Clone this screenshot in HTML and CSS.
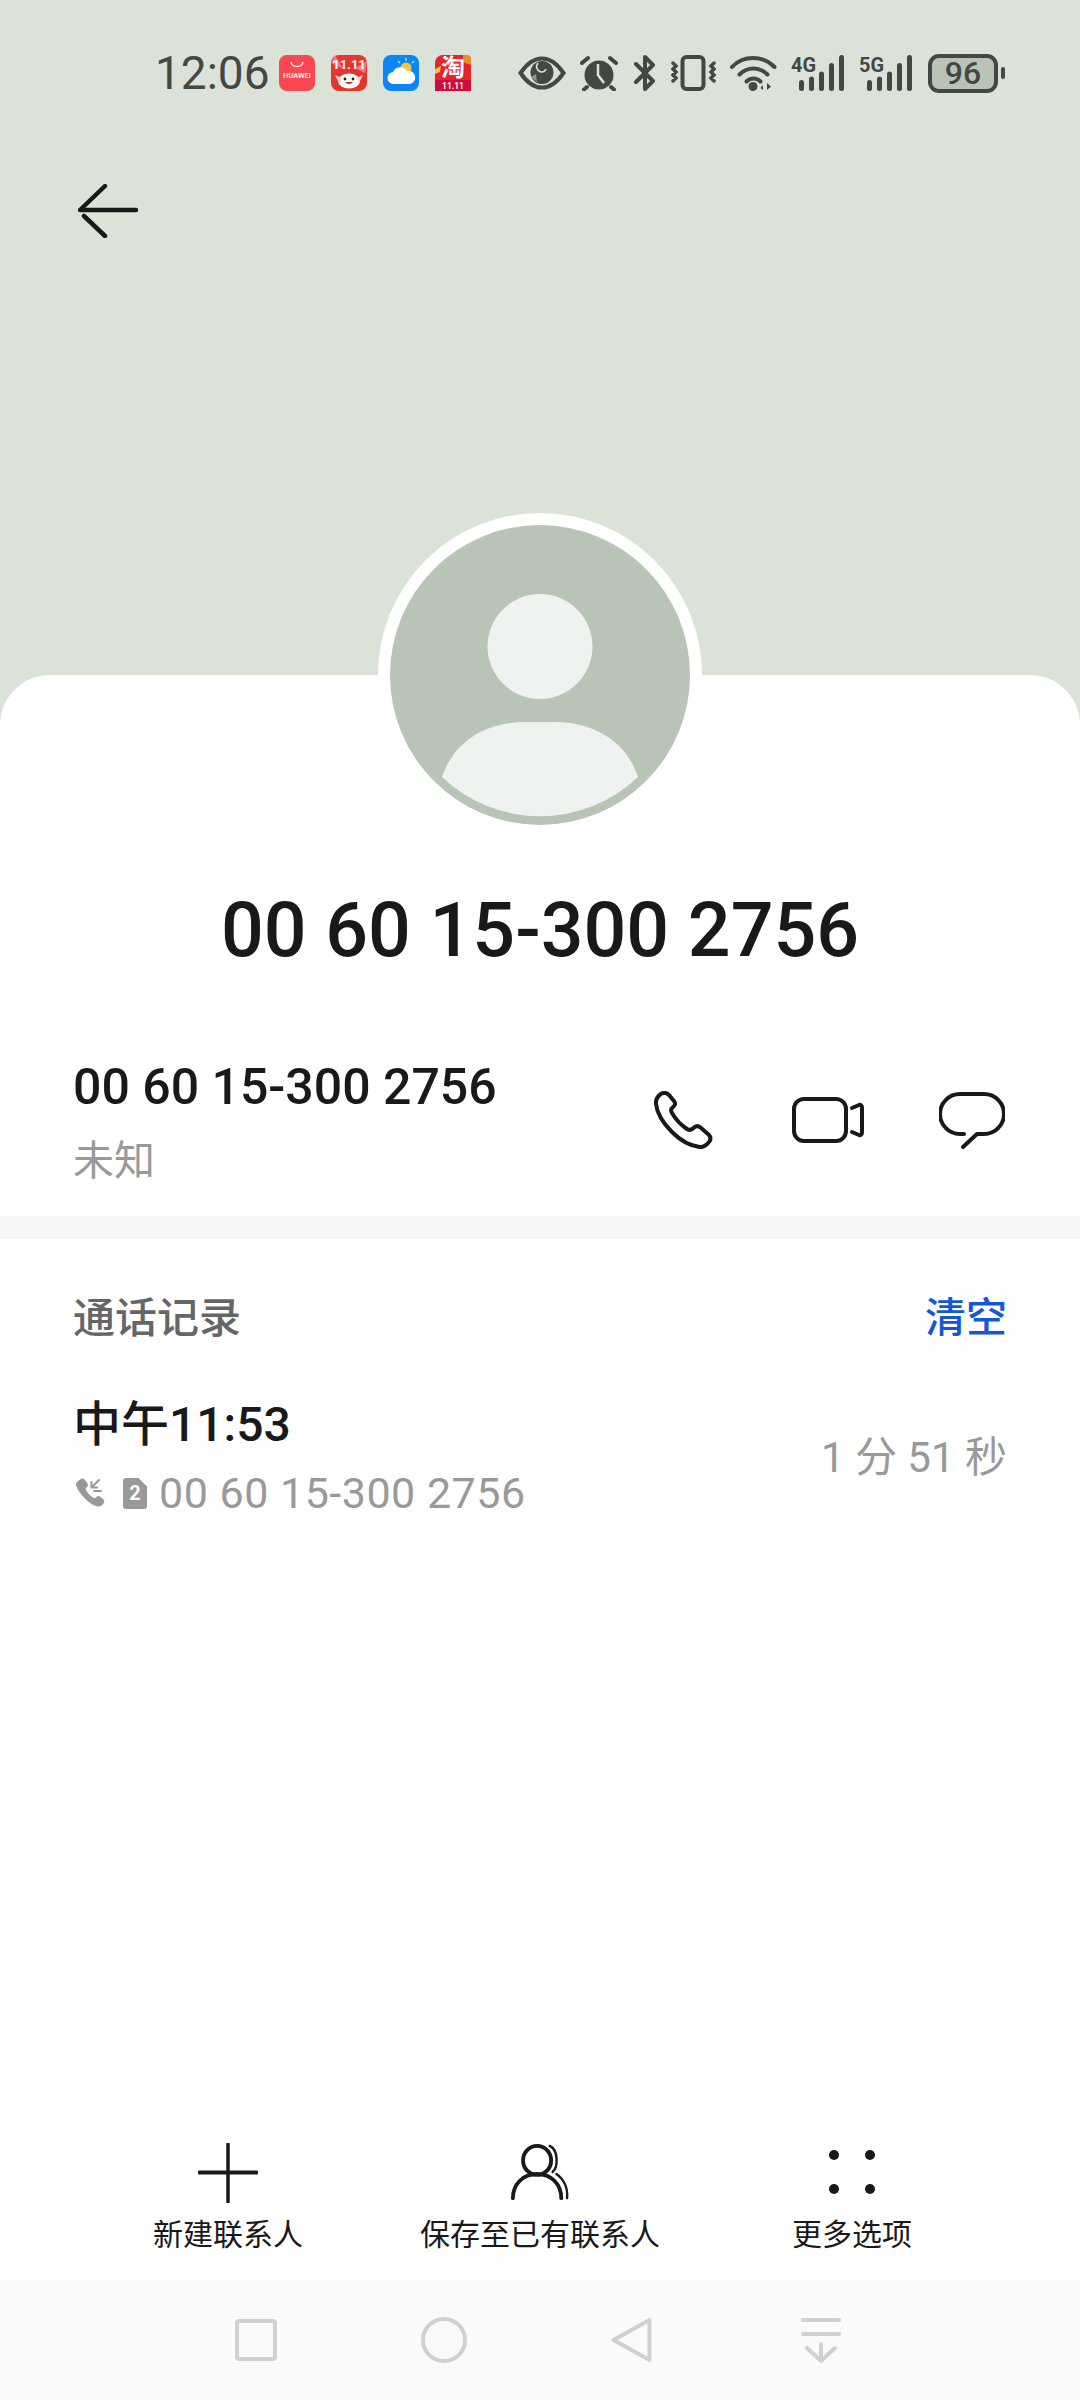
FILE: index.html
```html
<!DOCTYPE html>
<html lang="zh-CN">
<head>
<meta charset="utf-8">
<title>通话详情</title>
<link rel="stylesheet" href="styles.css">
</head>
<body>
<main class="page">
  <header class="hero">
    <div class="status">
      <span class="clock">12:06</span>
      <div class="apps">
        <svg class="app" viewBox="0 0 36 36"><rect width="36" height="36" rx="8" fill="#fb4752"/><path d="M12 7c1 6 11 6 12 0" fill="none" stroke="#fff" stroke-width="1.4"/><text x="18" y="23" class="app-huawei">HUAWEI</text></svg>
        <svg class="app" viewBox="0 0 36 36"><rect width="36" height="36" rx="8" fill="#e7352c"/><path d="M0 8L12 14 4 0ZM36 6L24 13 34 18Z" fill="#f27a8a"/><text x="18" y="14" class="app-sale">11.11</text><ellipse cx="18" cy="26" rx="11" ry="7.500" fill="#fff"/><path d="M4 20l7 3-3 5zM32 20l-7 3 3 5z" fill="#fbd5d0"/><circle cx="14" cy="24" r="1.400" fill="#222"/><circle cx="22" cy="24" r="1.400" fill="#222"/><path d="M14 27q4 4 8 0z" fill="#c3221c"/></svg>
        <svg class="app" viewBox="0 0 36 36"><rect width="36" height="36" rx="8" fill="#0b86f8"/><circle cx="23" cy="13" r="5.500" fill="#fbc33f"/><path d="M23 3v3M31 6l-2 2M15 6l2 2" stroke="#bfe0ff" stroke-width="1.400"/><path d="M11 29a6 6 0 0 1-1-12 8 8 0 0 1 14-1 6.500 6.500 0 0 1 3 13z" fill="#fff"/></svg>
        <svg class="app" viewBox="0 0 36 36"><rect width="36" height="36" rx="8" fill="#e5232a"/><path d="M28 0h4a4 4 0 0 1 4 4v6l-8-3z" fill="#e98a2b"/><path d="M0 14l6-3-1 6-5 2z" fill="#f6c343"/><text x="18" y="21" class="app-tao">淘</text><path d="M0 25h36v11H0z" fill="#cf0a3c"/><text x="18" y="34" class="app-band">11.11</text></svg>
      </div>
      <div class="indicators">
        <svg class="ind-eye" viewBox="0 0 48 34"><path d="M2.500 17C10 6 18 2.500 24 2.500S38 6 45.500 17C38 28 30 31.500 24 31.500S10 28 2.500 17Z" fill="none" class="ink-line"/><circle cx="24" cy="16.500" r="11.500" class="ink"/><path d="M20 7a5.500 5.500 0 0 0 3 9 5 5 0 0 0 5-3" fill="none" stroke="#dbe3d8" stroke-width="1.600"/><path d="M13 21l5-3 1 8z" fill="#dbe3d8" opacity=".5"/></svg>
        <svg class="ind-alarm" viewBox="0 0 38 36"><circle cx="19" cy="20" r="14.500" class="ink"/><path d="M18 9v11l6 8" fill="none" stroke="#dbe3d8" stroke-width="2.500"/><path d="M2 8l6-5M36 8l-6-5M7 32l-3 2.500M31 32l3 2.500" class="ink-line cap"/></svg>
        <svg class="ind-bt" viewBox="0 0 23 36"><path d="M3 9l17 17-8 8V2l8 8L3 27" fill="none" class="ink-line cap"/></svg>
        <svg class="ind-vib" viewBox="0 0 45 36"><rect x="11.500" y="2" width="21" height="32" rx="4" fill="none" class="ink-line"/><path d="M2 8l3 3-3 3 3 3-3 3 3 3-3 3M43 8l-3 3 3 3-3 3 3 3-3 3 3 3" fill="none" class="ink-line thin"/></svg>
        <svg class="ind-wifi" viewBox="0 0 47 36"><path d="M2 12C13 0 33 0 44.500 12M9.500 19.500c8-8 20-8 28 0M16.500 26.500c4-4 10-4 14 0" fill="none" class="ink-line cap"/><circle cx="23" cy="31.500" r="4.500" class="ink"/><path d="M33 35v-5l-2.500 3zM37 28v7l4-3.500z" class="ink"/></svg>
        <svg class="ind-net" viewBox="0 0 54 36"><text x="0" y="17" class="net-label" textLength="25" lengthAdjust="spacingAndGlyphs">4G</text><g class="ink"><rect x="8" y="25" width="5" height="11" rx="2.500"/><rect x="18" y="21.500" width="5" height="14.500" rx="2.500"/><rect x="28" y="16.500" width="5" height="19.500" rx="2.500"/><rect x="38" y="8" width="5" height="28" rx="2.500"/><rect x="48" y="0" width="5" height="36" rx="2.500"/></g></svg>
        <svg class="ind-net" viewBox="0 0 54 36"><text x="0" y="17" class="net-label" textLength="25" lengthAdjust="spacingAndGlyphs">5G</text><g class="ink"><rect x="8" y="25" width="5" height="11" rx="2.500"/><rect x="18" y="21.500" width="5" height="14.500" rx="2.500"/><rect x="28" y="16.500" width="5" height="19.500" rx="2.500"/><rect x="38" y="8" width="5" height="28" rx="2.500"/><rect x="48" y="0" width="5" height="36" rx="2.500"/></g></svg>
        <div class="battery"><span class="battery-level">96</span></div>
        <span class="battery-tip"></span>
      </div>
    </div>
    <button class="back" aria-label="返回">
      <svg class="back-icon" viewBox="0 0 60 54"><path d="M27 2L2 26H58" class="line-dark heavy"/><path d="M6 32L27 52" class="line-dark heavy"/></svg>
    </button>
  </header>

  <section class="card">
    <div class="avatar">
      <svg class="avatar-art" viewBox="0 0 300 300"><circle cx="150" cy="150" r="150" fill="#b8c4b6"/><circle cx="150" cy="121.500" r="52.500" fill="#eff3ef"/><path d="M52 252C64 216 96 197 136 197H164C204 197 236 216 248 252A142 142 0 0 1 52 252Z" fill="#eff3ef"/></svg>
    </div>
    <h1 class="title">00 60 15-300 2756</h1>

    <div class="contact">
      <div class="contact-text">
        <div class="contact-number">00 60 15-300 2756</div>
        <div class="contact-place">未知</div>
      </div>
      <div class="contact-actions">
        <svg class="icon-phone" viewBox="0 0 59 58"><path d="M7.500 2.500C10 1.500 13 2 15 4L20 10C22 12.500 21 14.500 19 16C17 17.500 16.500 19.500 18 22C22 29 27 34 33 38C35.500 39.500 37.500 39 39.500 37C41.500 35 44 34.500 46.500 36.500L54.500 43.500C57 46 57 48.500 55 51C52.500 54 49.500 56.500 45.500 56C37 55 27 50 18 41C9 32 3 22 2 13C1.500 8.500 4.500 4.500 7.500 2.500Z" class="line-dark"/></svg>
        <svg class="icon-video" viewBox="0 0 72 46"><rect x="2" y="2" width="52" height="42" rx="10" class="line-dark"/><path d="M60 11l7-3c1.500-.5 3 .5 3 2.500v25c0 2-1.500 3-3 2.500l-7-3" class="line-dark"/></svg>
        <svg class="icon-chat" viewBox="0 0 66 57"><path d="M25 42H21A19.500 19.500 0 0 1 21 2H45A19.500 19.500 0 0 1 45 42H38L24 55" class="line-dark"/></svg>
      </div>
    </div>

    <div class="rule"></div>

    <div class="log">
      <div class="log-head">
        <span class="log-title">通话记录</span>
        <span class="log-clear">清空</span>
      </div>
      <div class="log-row">
        <div>
          <div class="log-time">中午11:53</div>
          <div class="log-sub">
            <svg class="icon-incoming" viewBox="0 0 30 30"><path d="M6 1c2-1 3 0 4 1l2.500 3.500c1 2 0 3-1 4-1 1-1 2 0 3.500 2 3 4 5 6.500 6.500 1.500 1 2.500.5 3.500-.5s2-1.500 3.500-.5l3.500 3c1 1.500 1 3 0 4-1.500 2-3.500 3.500-6 3C15 27 3 15 1 7c-.5-2.500 3-5 5-6Z" class="fill-gray"/><path d="M24 2l-7.500 7.500M16.500 4v5.500H22M19 13h7" class="line-gray"/></svg>
            <span class="sim"><span class="sim-num">2</span></span>
            <span class="log-number">00 60 15-300 2756</span>
          </div>
        </div>
        <span class="log-duration">1 分 51 秒</span>
      </div>
    </div>

    <nav class="actions">
      <div class="action">
        <svg class="action-icon" viewBox="0 0 60 60"><path d="M30 1V59" class="line-dark thin-v"/><path d="M1.500 29.500H58.500" class="line-dark"/></svg>
        <span class="action-label">新建联系人</span>
      </div>
      <div class="action">
        <svg class="action-icon" viewBox="0 0 62 60"><ellipse cx="28" cy="17" rx="14.500" ry="15" class="line-dark"/><path d="M3 56C3 42 13 31 28 31S53 42 53 56" class="line-dark"/><path d="M41 2C50 6 50 24 44 29M48 31C55 36 60 45 59 56" class="line-dark thin"/></svg>
        <span class="action-label">保存至已有联系人</span>
      </div>
      <div class="action">
        <svg class="action-icon" viewBox="0 0 60 60"><circle cx="12" cy="12" r="5" fill="#191919"/><circle cx="48" cy="12" r="5" fill="#191919"/><circle cx="12" cy="46" r="5" fill="#191919"/><circle cx="48" cy="46" r="5" fill="#191919"/></svg>
        <span class="action-label">更多选项</span>
      </div>
    </nav>
  </section>

  <footer class="navbar">
    <svg class="nav-square" viewBox="0 0 42 42"><rect x="2" y="2" width="38" height="38" rx="2" class="line-nav"/></svg>
    <svg class="nav-circle" viewBox="0 0 46 46"><circle cx="23" cy="23" r="21" class="line-nav"/></svg>
    <svg class="nav-back" viewBox="0 0 41 46"><path d="M38.500 3V43L2.500 23Z" class="line-nav"/></svg>
    <svg class="nav-down" viewBox="0 0 40 46"><path d="M2 3H38M2 17H38M20 27V44M6 31L20 44 34 31" class="line-nav"/></svg>
  </footer>
</main>
</body>
</html>
```
FILE: styles.css
```css
* { box-sizing: border-box; }

html, body {
  margin: 0;
  background: #fff;
}

body {
  font-family: Roboto, "Noto Sans CJK SC", sans-serif;
  color: #191919;
}

.page {
  width: 1080px;
  height: 2400px;
  display: flex;
  flex-direction: column;
  overflow: hidden;
}

/* Top tinted band with the status bar and back arrow */
.hero {
  height: 725px;
  flex: none;
  background: #dbe3d8;
  padding-top: 53px;
}

.status {
  display: flex;
  align-items: center;
  height: 40px;
  padding: 0 75px 0 155px;
}

.clock {
  font-size: 46px;
  line-height: 40px;
  color: #434843;
  width: 124px;
}

.apps {
  display: flex;
  gap: 16px;
}

.app { width: 36px; height: 36px; display: block; }
.app-huawei { font: 500 7.500px Roboto, sans-serif; fill: #fff; text-anchor: middle; }
.app-sale { font: 700 13px Roboto, sans-serif; fill: #fff; text-anchor: middle; }
.app-tao { font: 700 24px "Noto Sans CJK SC", sans-serif; fill: #fff; text-anchor: middle; }
.app-band { font: 700 8.500px Roboto, sans-serif; fill: #fff; text-anchor: middle; }

.indicators {
  margin-left: auto;
  display: flex;
  align-items: center;
}

.ink { fill: #434843; }
.ink-line { stroke: #434843; stroke-width: 4; }
.ink-line.cap { stroke-linecap: round; stroke-linejoin: round; }
.ink-line.thin { stroke-width: 3.500; stroke-linecap: round; }

.ind-eye { width: 48px; height: 34px; margin-right: 14px; }
.ind-alarm { width: 38px; height: 36px; margin-right: 15px; }
.ind-bt { width: 23px; height: 36px; margin-right: 15px; }
.ind-vib { width: 45px; height: 36px; margin-right: 14px; }
.ind-wifi { width: 47px; height: 36px; margin-right: 14px; }
.ind-net { width: 54px; height: 36px; margin-right: 14px; }
.net-label { font: 700 20px Roboto, sans-serif; fill: #434843; }

.battery {
  width: 70px;
  height: 39px;
  margin-left: 1px;
  border: 4px solid #434843;
  border-radius: 11px;
  background: #b9c4b7;
  display: flex;
  align-items: center;
  justify-content: center;
}

.battery-level {
  font-size: 32px;
  font-weight: 500;
  line-height: 1;
  color: #434843;
}

.battery-tip {
  width: 4px;
  height: 12px;
  margin-left: 3px;
  border-radius: 2px;
  background: #434843;
}

.back {
  display: block;
  margin: 91px 0 0 78px;
  padding: 0;
  border: 0;
  background: none;
}

.back-icon { display: block; width: 60px; height: 54px; }

/* Shared stroke styles */
.line-dark {
  fill: none;
  stroke: #191919;
  stroke-width: 4;
  stroke-linecap: round;
  stroke-linejoin: round;
}
.line-dark.thin { stroke-width: 2.500; }
.line-dark.thin-v { stroke-width: 3.500; }
.line-dark.heavy { stroke-width: 4.500; }

.line-gray {
  fill: none;
  stroke: #999;
  stroke-width: 2;
  stroke-linecap: round;
}
.fill-gray { fill: #999; }

.line-nav {
  fill: none;
  stroke: #d0d0d0;
  stroke-width: 4;
  stroke-linecap: round;
  stroke-linejoin: round;
}

/* White sheet that overlaps the band */
.card {
  flex: 1;
  margin-top: -50px;
  background: #fff;
  border-radius: 50px 50px 0 0;
  display: flex;
  flex-direction: column;
  position: relative;
}

.avatar {
  width: 324px;
  height: 324px;
  margin: -162px auto 0;
  border: 12px solid #fff;
  border-radius: 50%;
  background: #fff;
}

.avatar-art { display: block; width: 300px; height: 300px; }

.title {
  margin: 48px 0 0;
  font-size: 75.300px;
  font-weight: 500;
  line-height: 90px;
  text-align: center;
}

.contact {
  margin-top: 77px;
  height: 164px;
  padding: 0 75px 24px 73px;
  display: flex;
  align-items: center;
  justify-content: space-between;
}

.contact-number {
  font-size: 50px;
  font-weight: 500;
  line-height: 70px;
}

.contact-place {
  font-family: "Noto Sans CJK SC", sans-serif;
  font-size: 41px;
  line-height: 70px;
  color: #999;
}

.contact-actions {
  display: flex;
  align-items: center;
  margin-top: -4px;
}

.icon-phone { width: 59px; height: 58px; margin-right: 79px; }
.icon-video { width: 72px; height: 46px; margin-right: 75px; }
.icon-chat { width: 66px; height: 57px; }

.rule {
  height: 23px;
  flex: none;
  background: #f6f6f6;
}

.log {
  padding: 45px 73px 0;
}

.log-head {
  display: flex;
  justify-content: space-between;
  align-items: center;
  height: 60px;
}

.log-title {
  font-size: 42px;
  font-weight: 500;
  color: #666;
}

.log-clear {
  font-size: 41px;
  font-weight: 500;
  color: #1558d6;
}

.log-row {
  margin-top: 51px;
  display: flex;
  align-items: center;
  justify-content: space-between;
}

.log-time {
  font-size: 48px;
  font-weight: 500;
  line-height: 60px;
}

.log-sub {
  margin-top: 8px;
  display: flex;
  align-items: center;
  height: 60px;
}

.icon-incoming { width: 30px; height: 30px; margin-left: 2px; }

.sim {
  width: 24px;
  height: 31px;
  margin-left: 18px;
  border-radius: 3px;
  background: linear-gradient(225deg, transparent 6px, #999 6px);
  display: flex;
  align-items: center;
  justify-content: center;
}

.sim-num {
  font-size: 20px;
  font-weight: 700;
  color: #fff;
  line-height: 1;
}

.log-number {
  margin-left: 12px;
  font-size: 43px;
  letter-spacing: .5px;
  color: #999;
}

.log-duration {
  font-size: 42px;
  color: #999;
  margin-bottom: 12px;
}

.actions {
  margin-top: auto;
  padding: 0 72px 28px;
  display: grid;
  grid-template-columns: repeat(3, 1fr);
}

.action {
  display: flex;
  flex-direction: column;
  align-items: center;
  gap: 9px;
}

.action-icon { width: 60px; height: 60px; display: block; }

.action-label {
  font-family: "Noto Sans CJK SC", sans-serif;
  font-size: 30px;
  line-height: 40px;
}

/* System navigation bar */
.navbar {
  height: 120px;
  flex: none;
  background: #fafafa;
  display: flex;
  align-items: center;
  gap: 144px;
  padding-left: 235px;
}

.nav-square { width: 42px; height: 42px; }
.nav-circle { width: 46px; height: 46px; }
.nav-back { width: 41px; height: 46px; }
.nav-down { width: 40px; height: 46px; margin-left: 5px; }
```
